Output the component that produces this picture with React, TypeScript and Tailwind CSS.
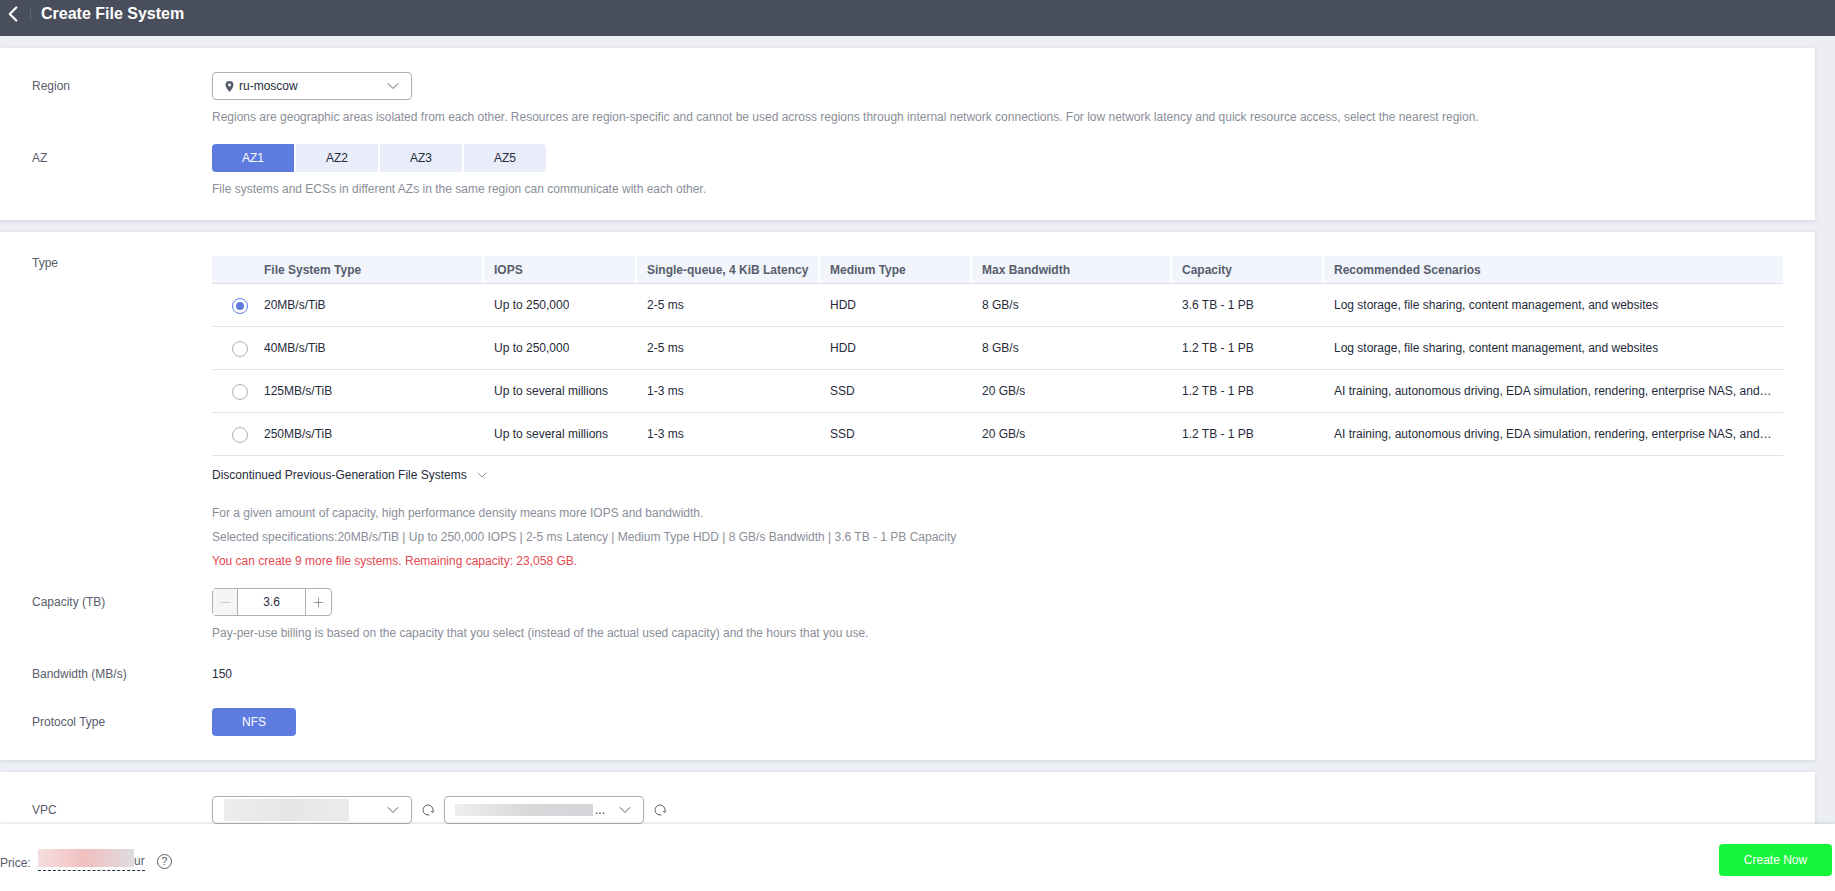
import React from 'react';
import { ChevronDown, ChevronLeft, Minus, Plus } from 'lucide-react';

const ROW_GRID = 'grid grid-cols-[52px_218px_153px_183px_152px_200px_152px_1fr]';

const COLUMNS = ['File System Type', 'IOPS', 'Single-queue, 4 KiB Latency', 'Medium Type', 'Max Bandwidth', 'Capacity', 'Recommended Scenarios'];

const LOG = 'Log storage, file sharing, content management, and websites';
const AI = 'AI training, autonomous driving, EDA simulation, rendering, enterprise NAS, and HPC';

const TYPES = [
    ['20MB/s/TiB', 'Up to 250,000', '2-5 ms', 'HDD', '8 GB/s', '3.6 TB - 1 PB', LOG],
    ['40MB/s/TiB', 'Up to 250,000', '2-5 ms', 'HDD', '8 GB/s', '1.2 TB - 1 PB', LOG],
    ['125MB/s/TiB', 'Up to several millions', '1-3 ms', 'SSD', '20 GB/s', '1.2 TB - 1 PB', AI],
    ['250MB/s/TiB', 'Up to several millions', '1-3 ms', 'SSD', '20 GB/s', '1.2 TB - 1 PB', AI],
];

function Hint({ children, red }: { children: React.ReactNode; red?: boolean }) {
    return <p className={`text-xs leading-[18px] ${red ? 'text-[#e54850]' : 'text-[#8a8e99]'}`}>{children}</p>;
}

function Label({ children }: { children: React.ReactNode }) {
    return <div className="w-[180px] shrink-0 h-7 flex items-center text-xs text-[#575d6c]">{children}</div>;
}

function Card({ children }: { children: React.ReactNode }) {
    return <section className="bg-white mr-5 mt-3 px-8 pt-6 shadow-[0_1px_4px_rgba(80,85,110,0.16)]">{children}</section>;
}

function RefreshIcon() {
    return (
        <svg width="12" height="12" viewBox="0 0 12 12" fill="none" stroke="#575d6c" strokeWidth="1" className="shrink-0">
            <path d="M7.5 10.8A5 5 0 1 1 10.9 7.2" />
            <path d="M8.9 7.2l2 1.4 .9-2.2" />
        </svg>
    );
}

function TypeTable() {
    return (
        <div className="text-xs">
            <div className={`${ROW_GRID} h-7 bg-[#f2f5fc] border-b border-[#dfe1e6] font-bold text-[#575d6c]`}>
                <div />
                {COLUMNS.map((col, i) => (
                    <div
                        key={col}
                        className={`flex items-center whitespace-nowrap ${i === 0 ? '' : 'pl-2.5 border-l-2 border-white'}`}
                    >
                        {col}
                    </div>
                ))}
            </div>
            {TYPES.map((row, r) => (
                <div key={row[0]} className={`${ROW_GRID} h-[43px] border-b border-[#dfe1e6] text-[#252b3a]`}>
                    <div className="flex items-center pl-5 pt-0.5">
                        {r === 0 ? (
                            <span className="size-4 rounded-full border border-[#5e7ce0] flex items-center justify-center">
                                <span className="size-2 rounded-full bg-[#5e7ce0]" />
                            </span>
                        ) : (
                            <span className="size-4 rounded-full border border-[#adb0b8]" />
                        )}
                    </div>
                    {row.map((cell, i) => (
                        <div key={i} className={`flex items-center min-w-0 ${i === 0 ? '' : 'pl-3'} ${i === 6 ? 'pr-2.5' : ''}`}>
                            <span className="truncate">{cell}</span>
                        </div>
                    ))}
                </div>
            ))}
        </div>
    );
}

export default function App() {
    return (
        <div className="h-screen flex flex-col overflow-hidden bg-[#eceef4] [font-family:Liberation_Sans,Arial,sans-serif]">
            <header className="h-9 shrink-0 bg-[#494e5c] flex items-center pb-2 text-white">
                <ChevronLeft className="size-[26px]" strokeWidth={2} />
                <span className="w-px h-[14px] bg-[#5f6473] ml-1" />
                <h1 className="ml-2.5 text-base font-bold">Create File System</h1>
            </header>

            <main className="flex-1 min-h-0 overflow-hidden">
                <Card>
                    <div className="flex">
                        <Label>Region</Label>
                        <div>
                            <button className="w-[200px] h-7 border border-[#adb0b8] rounded-sm flex items-center pl-3 pr-2 text-xs text-[#252b3a]">
                                <svg width="9" height="11" viewBox="0 0 9 11" fill="#575d6c" className="shrink-0">
                                    <path fillRule="evenodd" d="M4.5 0A4 4 0 0 1 8.5 4C8.5 6.5 6 9 4.5 11 3 9 .5 6.5.5 4A4 4 0 0 1 4.5 0ZM4.5 2.6a1.4 1.4 0 1 0 0 2.8 1.4 1.4 0 0 0 0-2.8Z" />
                                </svg>
                                <span className="ml-[5px]">ru-moscow</span>
                                <ChevronDown className="size-5 ml-auto text-[#575d6c]" strokeWidth={1.2} />
                            </button>
                            <div className="mt-2 whitespace-nowrap">
                                <Hint>
                                    Regions are geographic areas isolated from each other. Resources are region-specific and cannot be used across regions through internal network connections. For low network latency and quick resource access, select the nearest region.
                                </Hint>
                            </div>
                        </div>
                    </div>
                    <div className="flex mt-[18px] pb-[22px]">
                        <Label>AZ</Label>
                        <div>
                            <div className="flex gap-0.5">
                                {['AZ1', 'AZ2', 'AZ3', 'AZ5'].map((az, i) => (
                                    <button
                                        key={az}
                                        className={`w-[82px] h-7 text-xs ${i === 0 ? 'bg-[#5e7ce0] text-white rounded-l-sm' : 'bg-[#e9edfa] text-[#252b3a]'} ${i === 3 ? 'rounded-r-sm' : ''}`}
                                    >
                                        {az}
                                    </button>
                                ))}
                            </div>
                            <div className="mt-2">
                                <Hint>File systems and ECSs in different AZs in the same region can communicate with each other.</Hint>
                            </div>
                        </div>
                    </div>
                </Card>

                <Card>
                    <div className="flex">
                        <div className="w-[180px] shrink-0 text-xs leading-[14px] text-[#575d6c]">Type</div>
                        <div className="flex-1 min-w-0">
                            <TypeTable />
                            <div className="mt-2.5 h-[18px] flex items-center text-xs text-[#252b3a]">
                                Discontinued Previous-Generation File Systems
                                <ChevronDown className="size-4 ml-[7px] text-[#575d6c]" strokeWidth={1} />
                            </div>
                            <div className="mt-5 space-y-1.5">
                                <Hint>For a given amount of capacity, high performance density means more IOPS and bandwidth.</Hint>
                                <Hint>Selected specifications:20MB/s/TiB | Up to 250,000 IOPS | 2-5 ms Latency | Medium Type HDD | 8 GB/s Bandwidth | 3.6 TB - 1 PB Capacity</Hint>
                                <Hint red>You can create 9 more file systems. Remaining capacity: 23,058 GB.</Hint>
                            </div>
                        </div>
                    </div>
                    <div className="flex mt-[18px]">
                        <Label>Capacity (TB)</Label>
                        <div>
                            <div className="w-[120px] h-7 border border-[#adb0b8] rounded-sm flex text-xs text-[#252b3a]">
                                <span className="w-[25px] bg-[#f5f5f6] flex items-center justify-center text-[#adb0b8] border-r border-[#adb0b8]">
                                    <Minus className="size-[15px]" strokeWidth={1} />
                                </span>
                                <span className="flex-1 flex items-center justify-center">3.6</span>
                                <span className="w-[26px] flex items-center justify-center text-[#575d6c] border-l border-[#adb0b8]">
                                    <Plus className="size-[15px]" strokeWidth={1} />
                                </span>
                            </div>
                            <div className="mt-2">
                                <Hint>Pay-per-use billing is based on the capacity that you select (instead of the actual used capacity) and the hours that you use.</Hint>
                            </div>
                        </div>
                    </div>
                    <div className="flex mt-[18px]">
                        <Label>Bandwidth (MB/s)</Label>
                        <div className="h-7 flex items-center pb-px text-xs text-[#252b3a]">150</div>
                    </div>
                    <div className="flex mt-5 pb-6">
                        <Label>Protocol Type</Label>
                        <button className="w-[84px] h-7 bg-[#5e7ce0] text-white text-xs rounded-sm">NFS</button>
                    </div>
                </Card>

                <Card>
                    <div className="flex">
                        <Label>VPC</Label>
                        <div className="flex items-center">
                            <div className="w-[200px] h-7 border border-[#adb0b8] rounded-sm flex items-center pl-[11px] pr-2">
                                <span className="w-[125px] h-[22px] bg-linear-to-r from-[#ededee] via-[#e6e6e7] to-[#ebebec]" />
                                <ChevronDown className="size-5 ml-auto text-[#575d6c]" strokeWidth={1.2} />
                            </div>
                            <span className="mx-2.5"><RefreshIcon /></span>
                            <div className="w-[200px] h-7 border border-[#adb0b8] rounded-sm flex items-center pl-[10px] pr-2 text-xs text-[#252b3a]">
                                <span className="w-[138px] h-3 bg-linear-to-r from-[#eeeeef] via-[#d9d9dc] to-[#d5d5d9]" />
                                <span className="ml-0.5">...</span>
                                <ChevronDown className="size-5 ml-auto text-[#575d6c]" strokeWidth={1.2} />
                            </div>
                            <span className="ml-2.5"><RefreshIcon /></span>
                        </div>
                    </div>
                    <div className="h-24" />
                </Card>
            </main>

            <footer className="h-[67px] shrink-0 bg-white shadow-[0_-1px_3px_rgba(80,85,110,0.18)] relative flex items-start justify-between pt-5 pr-[3px] text-xs">
                <div className="flex items-start text-[#575d6c]">
                    <span className="mt-2.5 leading-[18px]">Price:</span>
                    <span className="ml-[7px] mt-[5px] w-[107px] h-[22px] border-b border-dashed border-[#252b3a] flex items-start">
                        <span className="w-[101px] h-[18px] bg-linear-to-r from-[#f6dede] via-[#f1bfc0] to-[#dcdcdf]" />
                        <span className="leading-[24px]">ur</span>
                    </span>
                    <span className="ml-3 mt-[10px] size-[15px] rounded-full border border-[#575d6c] flex items-center justify-center text-[11px] leading-none">?</span>
                </div>
                <button className="w-[113px] h-8 bg-[#16f53a] text-white text-xs rounded-sm">Create Now</button>
            </footer>
        </div>
    );
}
